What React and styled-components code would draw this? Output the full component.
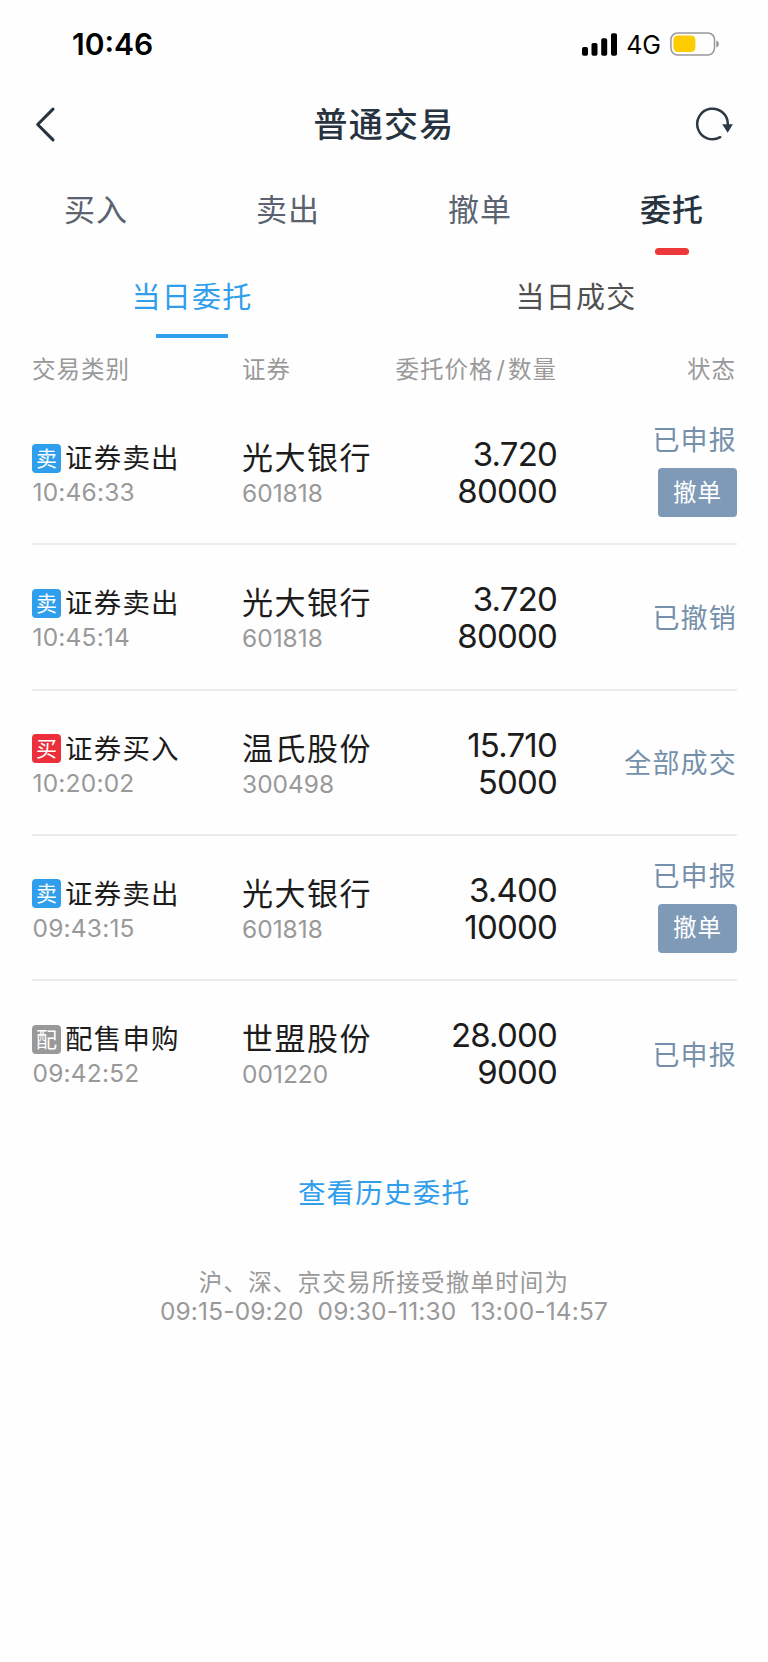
import { useState } from "react";
import styled, { createGlobalStyle } from "styled-components";

const tabs = ["买入", "卖出", "撤单", "委托"];
const subTabs = ["当日委托", "当日成交"];

const orders = [
  { id: 1, tag: "卖", type: "证券卖出", time: "10:46:33", name: "光大银行", code: "601818", price: "3.720", amount: "80000", status: "已申报", canCancel: true },
  { id: 2, tag: "卖", type: "证券卖出", time: "10:45:14", name: "光大银行", code: "601818", price: "3.720", amount: "80000", status: "已撤销" },
  { id: 3, tag: "买", type: "证券买入", time: "10:20:02", name: "温氏股份", code: "300498", price: "15.710", amount: "5000", status: "全部成交" },
  { id: 4, tag: "卖", type: "证券卖出", time: "09:43:15", name: "光大银行", code: "601818", price: "3.400", amount: "10000", status: "已申报", canCancel: true },
  { id: 5, tag: "配", type: "配售申购", time: "09:42:52", name: "世盟股份", code: "001220", price: "28.000", amount: "9000", status: "已申报" },
];

const tagColors = {
  卖: "#2f9eec",
  买: "#ec2f3a",
  配: "#999999",
};

function SignalIcon() {
  return (
    <svg width="36" height="23" viewBox="0 0 36 23" fill="#000">
      <rect x="0" y="14" width="6" height="8.7" rx="1.8" />
      <rect x="9.5" y="10" width="6" height="12.7" rx="1.8" />
      <rect x="19.2" y="5.2" width="6" height="17.5" rx="1.8" />
      <rect x="29" y="0.2" width="6" height="22.5" rx="1.8" />
    </svg>
  );
}

function BatteryIcon() {
  return (
    <svg width="50" height="24" viewBox="0 0 50 24">
      <rect x="0.9" y="0.9" width="43.6" height="22" rx="6.8" fill="none" stroke="#999" strokeWidth="1.5" />
      <rect x="3.4" y="3.6" width="22" height="16.4" rx="4.2" fill="#ffcc02" />
      <path d="M46.4 8.4c1.500.6 2.400 2 2.400 3.500s-.9 2.900-2.400 3.500z" fill="#8f8f8f" />
    </svg>
  );
}

function BackIcon() {
  return (
    <svg width="22" height="36" viewBox="0 0 22 36" fill="none" stroke="#273440" strokeWidth="3.1" strokeLinecap="round" strokeLinejoin="round">
      <path d="M18 2.200 2.700 17.500 18 32.800" />
    </svg>
  );
}

function RefreshIcon() {
  return (
    <svg width="38" height="36" viewBox="0 0 38 36">
      <path d="M25.200 30.200A15.300 15.300 0 1 1 32.800 17.500" fill="none" stroke="#2d3945" strokeWidth="2.5" strokeLinecap="round" />
      <path d="M27.200 17.200H37.900L32.700 25.800z" fill="#2d3945" />
    </svg>
  );
}

function OrderRow({ order }) {
  return (
    <Row>
      <Cell>
        <TypeLine>
          <Tag $color={tagColors[order.tag]}>{order.tag}</Tag>
          <span>{order.type}</span>
        </TypeLine>
        <SubText>{order.time}</SubText>
      </Cell>
      <Cell>
        <StockName>{order.name}</StockName>
        <SubText $code>{order.code}</SubText>
      </Cell>
      <PriceCell>
        <span>{order.price}</span>
        <span>{order.amount}</span>
      </PriceCell>
      <StatusCell $single={!order.canCancel}>
        <StatusText>{order.status}</StatusText>
        {order.canCancel && <CancelButton type="button">撤单</CancelButton>}
      </StatusCell>
    </Row>
  );
}

export default function App() {
  const [tab, setTab] = useState(3);
  const [subTab, setSubTab] = useState(0);

  return (
    <>
      <GlobalStyle />
      <Screen>
        <StatusBar>
          <Clock>10:46</Clock>
          <StatusIcons>
            <SignalIcon />
            <Network>4G</Network>
            <BatteryIcon />
          </StatusIcons>
        </StatusBar>

        <Header>
          <IconButton type="button" aria-label="返回">
            <BackIcon />
          </IconButton>
          <Title>普通交易</Title>
          <IconButton type="button" aria-label="刷新">
            <RefreshIcon />
          </IconButton>
        </Header>

        <Tabs>
          {tabs.map((label, i) => (
            <Tab key={label} type="button" $active={i === tab} onClick={() => setTab(i)}>
              {label}
            </Tab>
          ))}
        </Tabs>

        <SubTabs>
          {subTabs.map((label, i) => (
            <SubTab key={label} type="button" $active={i === subTab} onClick={() => setSubTab(i)}>
              {label}
            </SubTab>
          ))}
        </SubTabs>

        <TableHead>
          <span>交易类别</span>
          <span>证券</span>
          <HeadRight>
            委托价格<Slash>/</Slash>数量
          </HeadRight>
          <HeadRight>状态</HeadRight>
        </TableHead>

        <List>
          {orders.map((order) => (
            <OrderRow key={order.id} order={order} />
          ))}
        </List>

        <HistoryLink type="button">查看历史委托</HistoryLink>
        <Note>
          <span>沪、深、京交易所接受撤单时间为</span>
          <NoteTimes>{"09:15-09:20  09:30-11:30  13:00-14:57"}</NoteTimes>
        </Note>
      </Screen>
    </>
  );
}

const GlobalStyle = createGlobalStyle`
  * {
    box-sizing: border-box;
  }

  body {
    margin: 0;
    background: #fff;
    font-family: Inter, "Noto Sans CJK SC", sans-serif;
  }

  button {
    margin: 0;
    padding: 0;
    border: none;
    background: none;
    font-family: inherit;
    cursor: pointer;
  }

  svg {
    display: block;
  }
`;

const Screen = styled.main`
  width: 768px;
  min-height: 1662px;
  display: flex;
  flex-direction: column;
  background: #fefefe;
`;

const StatusBar = styled.div`
  height: 88px;
  padding: 0 48px 0 72px;
  display: flex;
  align-items: center;
  justify-content: space-between;
  color: #000;
`;

const Clock = styled.span`
  font-size: 30px;
  font-weight: 600;
  line-height: 36px;
`;

const StatusIcons = styled.div`
  display: flex;
  align-items: center;
`;

const Network = styled.span`
  margin: 0 9px 0 8px;
  padding-top: 2px;
  font-size: 25px;
  line-height: 28px;
`;

const Header = styled.header`
  height: 73px;
  padding: 0 35px;
  display: flex;
  align-items: center;
  justify-content: space-between;
`;

const IconButton = styled.button`
  width: 38px;
  height: 36px;
`;

const Title = styled.h1`
  margin: 0;
  font-size: 34px;
  font-weight: 500;
  line-height: 44px;
  letter-spacing: 1.2px;
  color: #273440;
`;

const Tabs = styled.nav`
  height: 97px;
  display: grid;
  grid-template-columns: repeat(4, 1fr);
`;

const Tab = styled.button`
  display: flex;
  flex-direction: column;
  align-items: center;
  padding-top: 28px;
  font-size: 31px;
  font-weight: ${({ $active }) => ($active ? 500 : 400)};
  line-height: 42px;
  letter-spacing: 1px;
  color: ${({ $active }) => ($active ? "#273440" : "#5b6370")};

  &::after {
    content: "";
    width: 34px;
    height: 7px;
    margin-top: 17px;
    border-radius: 4px;
    background: ${({ $active }) => ($active ? "#ec383a" : "transparent")};
  }
`;

const SubTabs = styled.div`
  height: 80px;
  display: grid;
  grid-template-columns: 1fr 1fr;
`;

const SubTab = styled.button`
  display: flex;
  flex-direction: column;
  align-items: center;
  justify-content: space-between;
  padding-top: 20px;
  font-size: 29px;
  line-height: 40px;
  letter-spacing: 1.2px;
  color: ${({ $active }) => ($active ? "#2f9eec" : "#505050")};

  &::after {
    content: "";
    width: 72px;
    height: 4px;
    background: ${({ $active }) => ($active ? "#2f9eec" : "transparent")};
  }
`;

const TableHead = styled.div`
  height: 62px;
  padding: 2px 32px 0 32px;
  display: grid;
  grid-template-columns: 210px 115px 200px 1fr;
  align-items: center;
  font-size: 23.5px;
  line-height: 32px;
  letter-spacing: 1px;
  color: #999;
`;

const HeadRight = styled.span`
  text-align: right;
`;

const Slash = styled.span`
  margin: 0 2px 0 3px;
`;

const List = styled.div`
  padding: 0 31px 0 32px;
`;

const Row = styled.div`
  height: 145.25px;
  display: grid;
  grid-template-columns: 210px 115px 200px 1fr;
  align-items: start;

  &:not(:last-child) {
    border-bottom: 2px solid #ebebeb;
  }
`;

const Cell = styled.div`
  padding-top: 41px;
  white-space: nowrap;
`;

const TypeLine = styled.div`
  display: flex;
  align-items: center;
  gap: 4px;
  font-size: 27.5px;
  line-height: 34px;
  letter-spacing: 1.2px;
  color: #1c1c1c;
`;

const Tag = styled.span`
  width: 29px;
  height: 29px;
  border-radius: 4px;
  background: ${({ $color }) => $color};
  color: #fff;
  font-size: 21px;
  line-height: 29px;
  letter-spacing: 0;
  text-align: center;
`;

const SubText = styled.div`
  margin-top: ${({ $code }) => ($code ? "2px" : "1px")};
  padding-left: ${({ $code }) => ($code ? "0" : "0.5px")};
  font-size: 24.5px;
  line-height: 32px;
  letter-spacing: ${({ $code }) => ($code ? "0" : "0.2px")};
  color: #999;
`;

const StockName = styled.div`
  font-size: 31px;
  line-height: 34px;
  letter-spacing: 1.5px;
  color: #1c1c1c;
`;

const PriceCell = styled.div`
  padding-top: 36px;
  display: flex;
  flex-direction: column;
  align-items: flex-end;
  font-size: 33px;
  line-height: 37px;
  letter-spacing: -0.8px;
  color: #1c1c1c;
`;

const StatusCell = styled.div`
  height: 100%;
  padding-top: ${({ $single }) => ($single ? "4px" : "0")};
  display: flex;
  flex-direction: column;
  align-items: flex-end;
  justify-content: center;
`;

const StatusText = styled.span`
  font-size: 27px;
  line-height: 34px;
  letter-spacing: 1.2px;
  color: #7590ab;
`;

const CancelButton = styled.button`
  width: 79px;
  height: 49px;
  margin: 10px 0 2px;
  border-radius: 4px;
  background: #7e9ab7;
  color: #fff;
  font-size: 23.5px;
  line-height: 32px;
  letter-spacing: 1px;
`;

const HistoryLink = styled.button`
  align-self: center;
  margin-top: 47px;
  font-size: 27.5px;
  line-height: 40px;
  letter-spacing: 1.2px;
  color: #2f9eec;
`;

const Note = styled.p`
  margin: 55px 0 0;
  display: flex;
  flex-direction: column;
  align-items: center;
  font-size: 23.5px;
  line-height: 29px;
  letter-spacing: 1.2px;
  color: #999;
`;

const NoteTimes = styled.span`
  font-size: 24.5px;
  letter-spacing: 0.15px;
  white-space: pre;
`;
